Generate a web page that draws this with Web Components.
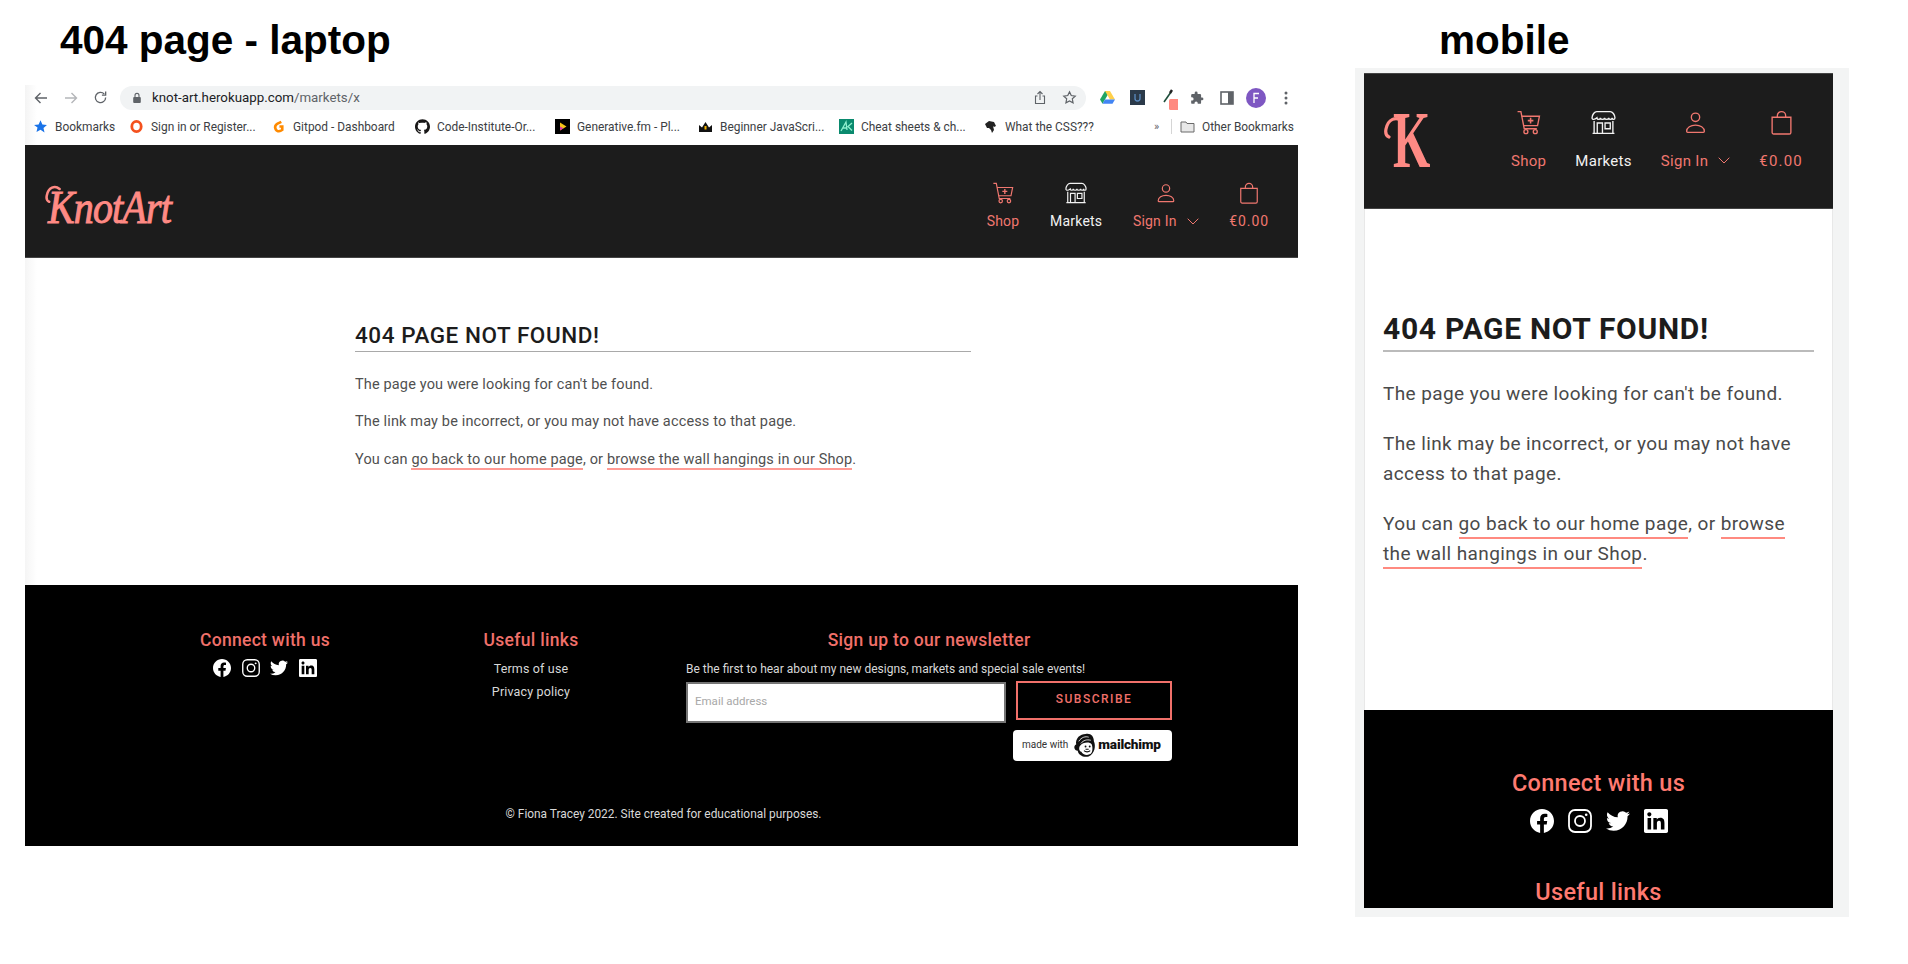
<!DOCTYPE html>
<html lang="en">
<head>
<meta charset="utf-8">
<title>404 page</title>
<style>
  html, body { margin: 0; background: #fff; }
  body { width: 1908px; height: 964px; overflow: hidden; font-family: Roboto, "Liberation Sans", sans-serif; }
  shot-board { width: 1908px; }
</style>
</head>
<body>
<shot-board>
  <section-title slot="laptop-title">404 page - laptop</section-title>
  <browser-chrome slot="laptop"></browser-chrome>
  <site-header slot="laptop" logo="KnotArt"></site-header>
  <not-found slot="laptop"></not-found>
  <site-footer slot="laptop">
    <footer-col heading="Connect with us"><social-icons></social-icons></footer-col>
    <footer-col heading="Useful links"><link-list></link-list></footer-col>
    <footer-col heading="Sign up to our newsletter"><newsletter-form></newsletter-form></footer-col>
  </site-footer>

  <section-title slot="mobile-title">mobile</section-title>
  <site-header slot="mobile" logo="K" mobile></site-header>
  <not-found slot="mobile" mobile></not-found>
  <site-footer slot="mobile" mobile>
    <footer-col heading="Connect with us"><social-icons></social-icons></footer-col>
    <footer-col heading="Useful links"></footer-col>
  </site-footer>
</shot-board>

<script>
const BODY_FONT = 'Roboto, "Liberation Sans", sans-serif';

class ShotBoard extends HTMLElement {
  constructor() {
    super();
    this.attachShadow({ mode: 'open' }).innerHTML = `
      <style>
        :host { display: flex; align-items: flex-start; }
        .laptop { width: 1273px; margin-left: 25px; display: flex; flex-direction: column; }
        .laptop .head { height: 85px; padding-left: 35px; }
        .mobile { margin-left: 57px; width: 494px; display: flex; flex-direction: column; }
        .mobile .head { height: 68px; padding-left: 84px; }
        .frame { background: #f3f4f4; padding: 5px 16px 9px 9px; height: 835px; }
        .screen { height: 835px; overflow: hidden; display: flex; flex-direction: column; background: #fff; }
      </style>
      <div class="laptop">
        <div class="head"><slot name="laptop-title"></slot></div>
        <slot name="laptop"></slot>
      </div>
      <div class="mobile">
        <div class="head"><slot name="mobile-title"></slot></div>
        <div class="frame"><div class="screen"><slot name="mobile"></slot></div></div>
      </div>`;
  }
}

class SectionTitle extends HTMLElement {
  constructor() {
    super();
    this.attachShadow({ mode: 'open' }).innerHTML = `
      <style>
        :host { display: block; font: bold 40.5px/48px "Liberation Sans", Arial, sans-serif; color: #000; padding-top: 16px; white-space: nowrap; }
      </style>
      <slot></slot>`;
  }
}

class BmItem extends HTMLElement {
  constructor() {
    super();
    this.attachShadow({ mode: 'open' }).innerHTML = `
      <style>
        :host { display: flex; align-items: center; gap: 7px; font: 11.9px/16px ${BODY_FONT}; color: #3c4043; white-space: nowrap; flex: none; }
        .ic { width: 15px; height: 15px; display: flex; flex: none; }
        ::slotted(svg) { width: 15px; height: 15px; display: block; }
      </style>
      <span class="ic"><slot name="icon"></slot></span><slot></slot>`;
  }
}

class BrowserChrome extends HTMLElement {
  constructor() {
    super();
    this.attachShadow({ mode: 'open' }).innerHTML = `
      <style>
        :host { display: block; height: 60px; background: linear-gradient(90deg,#f4f4f4,#fff 12px); }
        svg { display: block; flex: none; }
        .top { height: 25px; display: flex; align-items: center; }
        .nav { width: 95px; display: flex; align-items: center; gap: 14px; padding-left: 8px; box-sizing: border-box; }
        .url { width: 966px; height: 24px; border-radius: 12px; background: #f1f3f4; display: flex; align-items: center; box-sizing: border-box; padding: 0 9px 0 12px; font: 13.3px/16px ${BODY_FONT}; color: #202124; }
        .url .path { color: #5f6368; }
        .url .grow { flex: 1; padding-left: 10px; white-space: nowrap; }
        .url .tools { display: flex; gap: 15px; align-items: center; }
        .ext { display: flex; align-items: center; margin-left: 12px; }
        .bm { height: 33px; display: flex; align-items: center; padding-left: 8px; }
        .more { font: 11px ${BODY_FONT}; color: #5f6368; margin-left: 5px; width: 17px; }
        .sep { width: 1px; height: 15px; background: #d5d5d5; margin-right: 8px; }
      </style>
      <div class="top">
        <div class="nav">
          <svg width="16" height="16" viewBox="0 0 16 16" fill="none" stroke="#5f6368" stroke-width="1.4"><path d="M14 8H2.500M7.500 3 2.500 8l5 5"/></svg>
          <svg width="16" height="16" viewBox="0 0 16 16" fill="none" stroke="#b4b6b9" stroke-width="1.4"><path d="M2 8h11.500M8.500 3l5 5-5 5"/></svg>
          <svg width="15" height="15" viewBox="0 0 16 16" fill="none" stroke="#5f6368" stroke-width="1.4"><path d="M13.500 8A5.500 5.500 0 1 1 12 4.200"/><path d="M13.500 1.500v4h-4"/></svg>
        </div>
        <div class="url">
          <svg width="10" height="12" viewBox="0 0 10 12"><rect x="1.200" y="5" width="7.600" height="6" rx="1" fill="#5f6368"/><path d="M3 5V3.400a2 2 0 0 1 4 0V5" fill="none" stroke="#5f6368" stroke-width="1.100"/></svg>
          <span class="grow">knot-art.herokuapp.com<span class="path">/markets/x</span></span>
          <span class="tools">
            <svg width="14" height="15" viewBox="0 0 14 15" fill="none" stroke="#5f6368" stroke-width="1.100"><path d="M7 10V1.500M4.500 4 7 1.500 9.500 4M4.500 6H2.500v7.500h9V6H9.500"/></svg>
            <svg width="15" height="15" viewBox="0 0 24 24" fill="none" stroke="#5f6368" stroke-width="1.900"><path d="m12 3 2.800 5.900 6.400.8-4.700 4.400 1.200 6.400L12 17.400l-5.700 3.100 1.200-6.400-4.700-4.400 6.400-.8z"/></svg>
          </span>
        </div>
        <div class="ext">
          <svg width="15" height="13" viewBox="0 0 15 13" style="margin-left:2px"><path d="M5 0h5l-5 8.600L2.500 12.800 0 8.600z" fill="#1fa463"/><path d="M5 0h5l5 8.600H10z" fill="#ffd04b"/><path d="M2.500 12.800 5 8.600h10l-2.500 4.200z" fill="#4285f4"/></svg>
          <svg width="15" height="15" viewBox="0 0 15 15" style="margin-left:15px"><rect width="15" height="15" fill="#2b3a4a"/><path d="M5 4v4.500a2.500 2.500 0 0 0 5 0V4" fill="none" stroke="#5b8bc0" stroke-width="1.300"/></svg>
          <svg width="15" height="22" viewBox="0 0 15 22" style="margin-left:18px;margin-top:4px"><path d="M1 13 8 3" stroke="#1d4d3a" stroke-width="1.600"/><path d="M7 4l2-3" stroke="#222" stroke-width="2.400"/><rect x="6" y="10" width="10" height="11" rx="1.500" fill="#ff8a80"/></svg>
          <svg width="14" height="14" viewBox="0 0 24 24" fill="#5f6368" style="margin-left:12px"><path d="M20.500 11H19V7a2 2 0 0 0-2-2h-4V3.500a2.500 2.500 0 0 0-5 0V5H4a2 2 0 0 0-2 2v3.800h1.500a2.700 2.700 0 0 1 0 5.400H2V20a2 2 0 0 0 2 2h3.800v-1.500a2.700 2.700 0 0 1 5.400 0V22H17a2 2 0 0 0 2-2v-4h1.500a2.500 2.500 0 0 0 0-5z"/></svg>
          <svg width="14" height="14" viewBox="0 0 14 14" style="margin-left:16px"><rect x="1" y="1" width="12" height="12" fill="none" stroke="#5f6368" stroke-width="1.600"/><rect x="8" y="1" width="5" height="12" fill="#5f6368"/></svg>
          <svg width="20" height="20" viewBox="0 0 20 20" style="margin-left:12px"><circle cx="10" cy="10" r="10" fill="#7e57c2"/><path d="M8 15V5.500h5M8 10h4" fill="none" stroke="#fff" stroke-width="1.300"/></svg>
          <svg width="4" height="14" viewBox="0 0 4 14" style="margin-left:18px"><circle cx="2" cy="2" r="1.500" fill="#5f6368"/><circle cx="2" cy="7" r="1.500" fill="#5f6368"/><circle cx="2" cy="12" r="1.500" fill="#5f6368"/></svg>
        </div>
      </div>
      <div class="bm">
        <bm-item style="width:96px"><svg slot="icon" viewBox="0 0 24 24" fill="#1a73e8"><path d="m12 2 3 6.800 7.300.7-5.500 4.900 1.600 7.200L12 17l-6.400 3.600 1.600-7.200L1.700 9.500 9 8.800z"/></svg>Bookmarks</bm-item>
        <bm-item style="width:142px"><svg slot="icon" viewBox="0 0 16 16" fill="none" stroke="#f4511e" stroke-width="3"><ellipse cx="8" cy="8" rx="5" ry="5.500"/></svg>Sign in or Register...</bm-item>
        <bm-item style="width:144px"><svg slot="icon" viewBox="0 0 16 16" fill="none" stroke="#ff8a00" stroke-width="2.800"><path d="M11 3 7 5C4.500 6.500 4 9 5 11c1 2 3.500 2.700 5.500 1.500l1.500-1V8H9"/></svg>Gitpod - Dashboard</bm-item>
        <bm-item style="width:140px"><svg slot="icon" viewBox="0 0 24 24" fill="#181717"><path d="M12 .297c-6.630 0-12 5.373-12 12 0 5.303 3.438 9.800 8.205 11.385.6.113.82-.258.82-.63 0-.3-.01-1.050-.015-2.070-3.338.724-4.042-1.610-4.042-1.610C4.422 18.070 3.633 17.700 3.633 17.700c-1.087-.744.084-.729.084-.729 1.205.084 1.838 1.236 1.838 1.236 1.070 1.835 2.809 1.305 3.495.998.108-.776.417-1.305.76-1.605-2.665-.3-5.466-1.332-5.466-5.930 0-1.310.465-2.380 1.235-3.220-.135-.303-.54-1.523.105-3.176 0 0 1.005-.322 3.300 1.230.96-.267 1.980-.399 3-.405 1.020.006 2.040.138 3 .405 2.280-1.552 3.285-1.230 3.285-1.230.645 1.653.24 2.873.12 3.176.765.84 1.230 1.910 1.230 3.220 0 4.610-2.805 5.625-5.475 5.920.42.36.81 1.096.81 2.220 0 1.606-.015 2.896-.015 3.286 0 .315.21.69.825.57C20.565 22.092 24 17.592 24 12.297c0-6.627-5.373-12-12-12"/></svg>Code-Institute-Or...</bm-item>
        <bm-item style="width:143px"><svg slot="icon" viewBox="0 0 15 15"><rect width="15" height="15" fill="#000"/><path d="M5 3.500 11.500 7.500 5 11.500z" fill="#f5c518"/><path d="M5 7.500V11.500L8.500 9.300z" fill="#d63aa8"/></svg>Generative.fm - Pl...</bm-item>
        <bm-item style="width:141px"><svg slot="icon" viewBox="0 0 15 15"><path d="M1 13V6l3 2.500L7.500 3 11 8.500 14 6v7z" fill="#111"/><path d="M6.500 7h2v3.500h-2z" fill="#f5b400"/></svg>Beginner JavaScri...</bm-item>
        <bm-item style="width:144px"><svg slot="icon" viewBox="0 0 15 15"><rect width="15" height="15" fill="#0a8a6e"/><path d="M2 12 7 3l1 8M4 9h4M13 4 9 7.500l4 4" fill="none" stroke="#8ff0cf" stroke-width="1.300"/></svg>Cheat sheets &amp; ch...</bm-item>
        <bm-item style="width:166px"><svg slot="icon" viewBox="0 0 15 15" fill="#222"><path d="M2 5 6 2l5 1 2 4-2 1-1-1 1 4-2 3-1-3-2-2-2 0-1-2z"/></svg>What the CSS???</bm-item>
        <span class="more">»</span><span class="sep"></span>
        <bm-item><svg slot="icon" viewBox="0 0 15 15" fill="#e8e8e8" stroke="#6a6a6a" stroke-width="1"><path d="M1 3h5l1 1.500h7V13H1z"/></svg>Other Bookmarks</bm-item>
      </div>`;
  }
}

const NAV_ICONS = {
  cart: `<svg viewBox="0 0 24 24" fill="none" stroke="currentColor" stroke-width="1.300"><path d="M1.500 1.500h3.200l3.200 16.500H20"/><path d="M5.500 6h17l-1.800 9H7.400"/><path d="M14 7.500v5.500M11.300 10.200h5.400" stroke-width="1.500"/><circle cx="9.500" cy="20.800" r="1.900"/><circle cx="18.500" cy="20.800" r="1.900"/></svg>`,
  store: `<svg viewBox="0 0 24 24" fill="none" stroke="currentColor" stroke-width="1.300"><path d="M5.500 1.500h13c2 0 4.500 3 4.500 6 0 2-2.500 2-2.700 0-.2 2-3.100 2-3.300 0-.2 2-3.800 2-4 0-.2 2-3.800 2-4 0-.2 2-3.100 2-3.300 0C3.500 9.500 1 9.500 1 7.500c0-3 2.500-6 4.500-6z"/><path d="M3 10.500V22M21 10.500V22M1.500 22.500h21"/><path d="M6 22V12.500h5V22M13.500 12.500h5v5.500h-5z"/></svg>`,
  user: `<svg viewBox="0 0 24 24" fill="none" stroke="currentColor" stroke-width="1.300"><circle cx="12" cy="7" r="4"/><path d="M3.500 20.500c0-3.800 4-6 8.500-6s8.500 2.200 8.500 6c0 .6-.4 1-1 1h-15c-.6 0-1-.4-1-1z"/></svg>`,
  bag: `<svg viewBox="0 0 24 24" fill="none" stroke="currentColor" stroke-width="1.300"><path d="M3 7h18v14.500a1.500 1.500 0 0 1-1.500 1.500h-15A1.500 1.500 0 0 1 3 21.500z"/><path d="M8 7V5.500a4 4 0 0 1 8 0V7"/></svg>`
};

class NavItem extends HTMLElement {
  constructor() {
    super();
    const icon = NAV_ICONS[this.getAttribute('icon')];
    const caret = this.hasAttribute('caret')
      ? `<svg class="caret" viewBox="0 0 12 7" fill="none" stroke="currentColor" stroke-width="1"><path d="M.7.7 6 6l5.300-5.300"/></svg>` : '';
    this.attachShadow({ mode: 'open' }).innerHTML = `
      <style>
        :host { display: flex; flex-direction: column; align-items: center; color: #f0776f; gap: var(--nav-gap); }
        :host([light]) { color: #f2f2f2; }
        :host([wide]) { letter-spacing: var(--nav-wide); }
        .icon { width: var(--nav-icon); height: var(--nav-icon); display: block; }
        .icon svg { width: 100%; height: 100%; display: block; }
        .label { display: flex; align-items: center; gap: 10px; font-family: ${BODY_FONT}; font-size: var(--nav-size); line-height: 18px; white-space: nowrap; }
        .caret { width: 12px; height: 7px; }
      </style>
      <span class="icon">${icon}</span>
      <span class="label"><span><slot></slot></span>${caret}</span>`;
  }
}

class SiteHeader extends HTMLElement {
  constructor() {
    super();
    const mark = this.getAttribute('logo');
    this.attachShadow({ mode: 'open' }).innerHTML = `
      <style>
        :host { display: flex; align-items: center; justify-content: space-between; background: #1c1c1c; height: 113px; box-sizing: border-box; border-bottom: 1px solid #444; padding: 0 29px 0 18px; flex: none;
          letter-spacing: .2px; --nav-icon: 22px; --nav-gap: 8.5px; --nav-size: 14px; --nav-wide: .9px; }
        :host([mobile]) { height: 136px; padding: 0 30px 0 18px; letter-spacing: .3px; --nav-icon: 25px; --nav-gap: 17px; --nav-size: 15px; --nav-wide: 1.2px; border-top: 1px solid #444; }
        .logo { position: relative; display: block; top: 7px; width: 131px; height: 46px; }
        .logo span { display: block; font: italic 46px/46px "Liberation Serif", serif; letter-spacing: -1px; color: #ff8a84; -webkit-text-stroke: 1px #ff8a84; transform: scaleX(.87); transform-origin: left; margin-left: 5px; white-space: nowrap; }
        .logo svg { position: absolute; left: 0; top: 0; width: 22px; height: 24px; }
        :host([mobile]) .logo { top: -1px; width: 48px; height: 60px; }
        :host([mobile]) .logo span { font: bold 80px/60px "Liberation Serif", serif; letter-spacing: 0; -webkit-text-stroke: 0; transform: scaleX(.6); margin-left: 11px; }
        :host([mobile]) .logo svg { width: 26px; height: 30px; top: 6px; }
        nav { display: flex; gap: 30.7px; align-items: flex-start; padding-top: 10px; }
        :host([mobile]) nav { gap: 29px; padding: 0 0 3px; }
      </style>
      <span class="logo">
        <span>${mark}</span>
        <svg viewBox="0 0 26 30" fill="none" stroke="#ff8a84" stroke-width="3.2" stroke-linecap="round"><path d="M20 5C14 0 6 3 4 13c-.8 4 .4 7 3 8"/></svg>
      </span>
      <nav>
        <nav-item icon="cart">Shop</nav-item>
        <nav-item icon="store" light>Markets</nav-item>
        <nav-item icon="user" caret>Sign In</nav-item>
        <nav-item icon="bag" wide>€0.00</nav-item>
      </nav>`;
  }
}

class NotFound extends HTMLElement {
  constructor() {
    super();
    this.attachShadow({ mode: 'open' }).innerHTML = `
      <style>
        :host { display: block; height: 327px; box-sizing: border-box; padding: 65px 0 0 330px; background: linear-gradient(90deg,#f5f5f5,#fff 12px); flex: none; color: #505050; }
        .box { width: 616px; }
        h1 { margin: 0 0 21.5px; font: 500 22.5px/24px ${BODY_FONT}; color: #1c1c1c; padding-bottom: 4px; border-bottom: 1px solid #a9a9a9; letter-spacing: .55px; }
        p { margin: 0 0 15.5px; font: 14.5px/22px ${BODY_FONT}; letter-spacing: .15px; }
        a { color: inherit; text-decoration: none; border-bottom: 2px solid #ff9a94; padding-bottom: 0; }
        :host([mobile]) { height: 501px; padding: 104px 0 0 18px; background: #fff; border-left: 1px solid #e8e8e8; border-right: 1px solid #e8e8e8; color: #4a4a4a; }
        :host([mobile]) .box { width: 431px; }
        :host([mobile]) h1 { font-size: 30px; font-weight: 700; letter-spacing: .7px; line-height: 32px; margin-bottom: 27px; padding-bottom: 5px; border-bottom: 2px solid #bbb; }
        :host([mobile]) p { font-size: 19px; line-height: 30px; margin-bottom: 20px; letter-spacing: .4px; }
        :host([mobile]) a { border-bottom: 2px solid #ff8a80; padding-bottom: 2px; }
      </style>
      <div class="box">
        <h1>404 PAGE NOT FOUND!</h1>
        <p>The page you were looking for can't be found.</p>
        <p>The link may be incorrect, or you may not have access to that page.</p>
        <p>You can <a href="#">go back to our home page</a>, or <a href="#">browse the wall hangings in our Shop</a>.</p>
      </div>`;
  }
}

class FooterCol extends HTMLElement {
  constructor() {
    super();
    this.attachShadow({ mode: 'open' }).innerHTML = `
      <style>
        :host { display: flex; flex-direction: column; align-items: center; }
        h3 { margin: 0 0 var(--col-gap, 9px); font: 500 var(--col-size, 17.5px)/var(--col-lh, 20px) ${BODY_FONT}; letter-spacing: .3px; color: var(--col-color, #f0706a); white-space: nowrap; }
      </style>
      <h3>${this.getAttribute('heading')}</h3>
      <slot></slot>`;
  }
}

class SocialIcons extends HTMLElement {
  constructor() {
    super();
    this.attachShadow({ mode: 'open' }).innerHTML = `
      <style>
        :host { display: flex; gap: var(--soc-gap, 10.5px); }
        svg { width: var(--soc-size, 18px); height: var(--soc-size, 18px); display: block; fill: #fff; }
      </style>
      <svg viewBox="0 0 24 24"><path d="M24 12.073c0-6.627-5.373-12-12-12s-12 5.373-12 12c0 5.990 4.388 10.954 10.125 11.854v-8.385H7.078v-3.470h3.047V9.430c0-3.007 1.792-4.669 4.533-4.669 1.312 0 2.686.235 2.686.235v2.953H15.830c-1.491 0-1.956.925-1.956 1.874v2.250h3.328l-.532 3.470h-2.796v8.385C19.612 23.027 24 18.062 24 12.073z"/></svg>
      <svg viewBox="0 0 24 24" style="fill:none;stroke:#fff;stroke-width:1.8"><rect x="1" y="1" width="22" height="22" rx="6"/><circle cx="12" cy="12" r="5"/><circle cx="18.200" cy="5.800" r="1.300" fill="#fff" stroke="none"/></svg>
      <svg viewBox="0 0 24 24"><path d="M23.953 4.570a10 10 0 01-2.825.775 4.958 4.958 0 002.163-2.723c-.951.555-2.005.959-3.127 1.184a4.920 4.920 0 00-8.384 4.482C7.690 8.095 4.067 6.130 1.640 3.162a4.822 4.822 0 00-.666 2.475c0 1.710.87 3.213 2.188 4.096a4.904 4.904 0 01-2.228-.616v.06a4.923 4.923 0 003.946 4.827 4.996 4.996 0 01-2.212.085 4.936 4.936 0 004.604 3.417 9.867 9.867 0 01-6.102 2.105c-.39 0-.779-.023-1.170-.067a13.995 13.995 0 007.557 2.209c9.053 0 13.998-7.496 13.998-13.985 0-.21 0-.42-.015-.63A9.935 9.935 0 0024 4.590z"/></svg>
      <svg viewBox="0 0 24 24"><path d="M20.447 20.452h-3.554v-5.569c0-1.328-.027-3.037-1.852-3.037-1.853 0-2.136 1.445-2.136 2.939v5.667H9.351V9h3.414v1.561h.046c.477-.9 1.637-1.850 3.370-1.850 3.601 0 4.267 2.370 4.267 5.455v6.286zM5.337 7.433c-1.144 0-2.063-.926-2.063-2.065 0-1.138.92-2.063 2.063-2.063 1.140 0 2.064.925 2.064 2.063 0 1.139-.925 2.065-2.064 2.065zm1.782 13.019H3.555V9h3.564v11.452zM22.225 0H1.771C.792 0 0 .774 0 1.729v20.542C0 23.227.792 24 1.771 24h20.451C23.200 24 24 23.227 24 22.271V1.729C24 .774 23.200 0 22.222 0h.003z"/></svg>`;
  }
}

class LinkList extends HTMLElement {
  constructor() {
    super();
    this.attachShadow({ mode: 'open' }).innerHTML = `
      <style>
        :host { display: flex; flex-direction: column; align-items: center; gap: 3px; font: 12.5px/20px ${BODY_FONT}; letter-spacing: .15px; color: #d8d8d8; }
        a { color: inherit; text-decoration: none; }
      </style>
      <a href="#">Terms of use</a>
      <a href="#">Privacy policy</a>`;
  }
}

class NewsletterForm extends HTMLElement {
  constructor() {
    super();
    this.attachShadow({ mode: 'open' }).innerHTML = `
      <style>
        :host { display: block; width: 486px; font: 12px/20px ${BODY_FONT}; color: #d8d8d8; }
        p { margin: 0 0 3px; }
        .row { display: flex; align-items: flex-start; }
        input { width: 320px; height: 41px; box-sizing: border-box; border: 2px solid #757575; background: #fff; padding: 0 7px 4px; font: 11.5px ${BODY_FONT}; border-radius: 0; outline: none; }
        input::placeholder { color: #a8a8a8; opacity: 1; }
        button { width: 156px; height: 39px; margin: -1px 0 0 10px; box-sizing: border-box; background: #000; border: 2px solid #f0706a; color: #f0706a; font: 500 12px/1 ${BODY_FONT}; letter-spacing: 1.5px; padding: 0 0 3px; }
        .chimp { margin: 6.5px 0 0 327px; width: 159px; height: 31px; box-sizing: border-box; background: #fff; border-radius: 4px; display: flex; align-items: center; padding-left: 9px; color: #333; font-size: 10px; }
        .chimp svg { width: 23px; height: 25px; margin: 0 2px 0 5px; flex: none; }
        .chimp b { font: 900 13.6px/1 Roboto, sans-serif; color: #111; letter-spacing: -.2px; }
      </style>
      <p>Be the first to hear about my new designs, markets and special sale events!</p>
      <div class="row">
        <input type="email" placeholder="Email address">
        <button type="button">SUBSCRIBE</button>
      </div>
      <div class="chimp">
        <span>made with</span>
        <svg viewBox="0 0 22 24"><path d="M3 11C2 5 7 1 12 1c5-1 8 2 8 7 2 4 1 12-5 14.500-5 1.500-10-1.500-10.500-5.500C1 17 0 12 3 11z" fill="#111"/><path d="M7 12c2-3 9-4 11-1 1 3 1 7-1 9-3 2-8 1-9-2-2 0-3-4-1-6z" fill="#fff"/><path d="M5.500 8C8 4 12 3 15 4M7.500 10C10 7 13 6 17 7" fill="none" stroke="#fff" stroke-width=".8"/><circle cx="12" cy="13" r=".9" fill="#111"/><circle cx="16" cy="13" r=".9" fill="#111"/><path d="M10.500 17c1.500 1.500 4.500 1.500 6 0M12 15.500h3" fill="none" stroke="#111" stroke-width="1"/></svg>
        <b>mailchimp</b>
      </div>`;
  }
}

class SiteFooter extends HTMLElement {
  constructor() {
    super();
    const copy = this.hasAttribute('mobile') ? '' :
      `<div class="copy">© Fiona Tracey 2022. Site created for educational purposes.</div>`;
    this.attachShadow({ mode: 'open' }).innerHTML = `
      <style>
        :host { display: block; background: #000; height: 261px; box-sizing: border-box; padding-top: 45px; flex: none; }
        .cols { display: grid; grid-template-columns: 200px 200px 486px; height: 174px; padding-left: 140px; }
        ::slotted(footer-col:nth-child(2)) { margin-left: 66px; width: 200px; }
        ::slotted(footer-col:nth-child(3)) { margin-left: 121px; width: 486px; }
        .copy { text-align: center; font: 11.9px/20px ${BODY_FONT}; color: #d8d8d8; padding-left: 4px; }
        :host([mobile]) { height: 198px; padding-top: 59px; overflow: hidden;
          --col-size: 23.5px; --col-lh: 28px; --col-gap: 12px; --soc-size: 24px; --soc-gap: 14px; --col-color: #ff7a70; }
        :host([mobile]) .cols { display: flex; flex-direction: column; align-items: center; gap: 45px; padding: 0; height: auto; }
        :host([mobile]) ::slotted(footer-col) { margin: 0; width: auto; }
      </style>
      <div class="cols"><slot></slot></div>
      ${copy}`;
  }
}

customElements.define('shot-board', ShotBoard);
customElements.define('section-title', SectionTitle);
customElements.define('bm-item', BmItem);
customElements.define('browser-chrome', BrowserChrome);
customElements.define('nav-item', NavItem);
customElements.define('site-header', SiteHeader);
customElements.define('not-found', NotFound);
customElements.define('footer-col', FooterCol);
customElements.define('social-icons', SocialIcons);
customElements.define('link-list', LinkList);
customElements.define('newsletter-form', NewsletterForm);
customElements.define('site-footer', SiteFooter);
</script>
</body>
</html>
